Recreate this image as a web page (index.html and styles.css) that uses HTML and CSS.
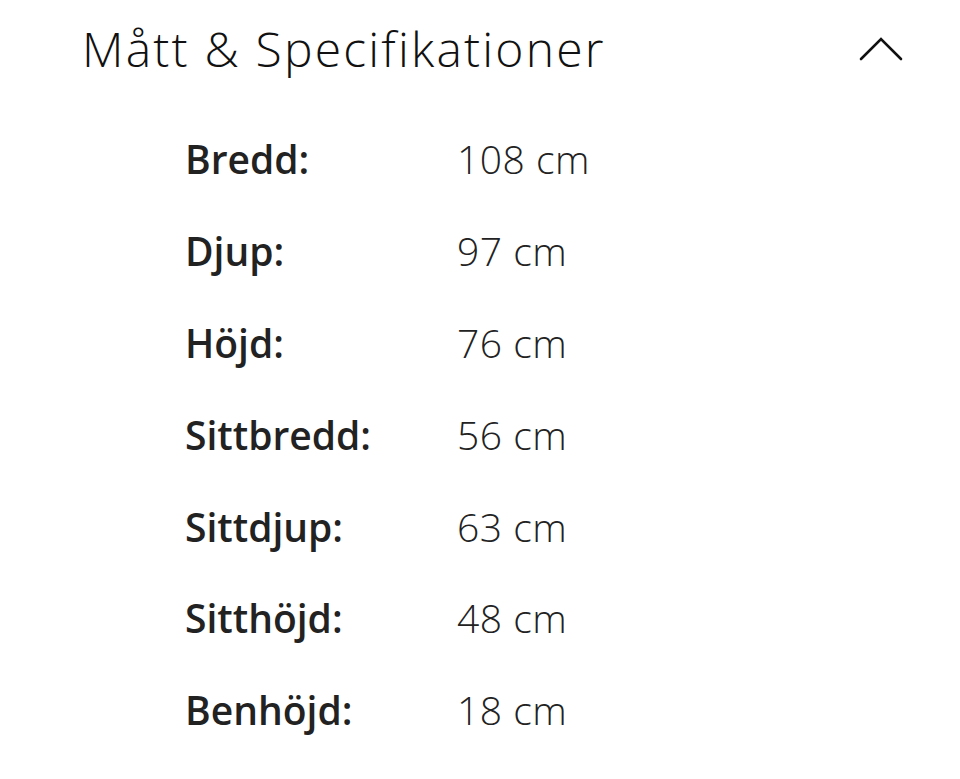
FILE: index.html
```html
<!DOCTYPE html>
<html lang="sv">
<head>
<meta charset="utf-8">
<link rel="stylesheet" href="styles.css">
</head>
<body>
<section class="accordion">
  <div class="acc-head">
    <h2 class="acc-title">Mått &amp; Specifikationer</h2>
    <svg class="chevron" width="44" height="24" viewBox="0 0 44 24" aria-hidden="true">
      <polyline points="2,22 22,2 42,22" fill="none" stroke="#111" stroke-width="2.6" stroke-linecap="round" stroke-linejoin="miter"/>
    </svg>
  </div>
  <dl class="specs">
    <dt>Bredd:</dt><dd>108 cm</dd>
    <dt>Djup:</dt><dd>97 cm</dd>
    <dt>Höjd:</dt><dd>76 cm</dd>
    <dt>Sittbredd:</dt><dd>56 cm</dd>
    <dt>Sittdjup:</dt><dd>63 cm</dd>
    <dt>Sitthöjd:</dt><dd>48 cm</dd>
    <dt>Benhöjd:</dt><dd>18 cm</dd>
  </dl>
</section>
</body>
</html>
```
FILE: styles.css
```css
html, body {
  margin: 0;
  padding: 0;
  background: #fff;
}
body {
  font-family: "Open Sans", "DejaVu Sans", sans-serif;
  color: #222;
}
.acc-head {
  height: 96px;
  display: flex;
  align-items: center;
  justify-content: space-between;
  padding: 0 57px 0 82px;
}
.acc-title {
  margin: 0;
  font-size: 48px;
  font-weight: 300;
  color: #111;
  letter-spacing: 2.2px;
}
.chevron {
  display: block;
  margin-top: 2px;
}
.specs {
  margin: 0;
  padding: 17px 0 0 185px;
  display: grid;
  grid-template-columns: 272px auto;
  grid-auto-rows: 91.8px;
  align-items: center;
}
.specs dt {
  font-size: 39px;
  font-weight: 580;
  color: #222;
}
.specs dd {
  margin: 0;
  font-size: 39px;
  font-weight: 300;
  color: #222;
  letter-spacing: 0.5px;
}
```
